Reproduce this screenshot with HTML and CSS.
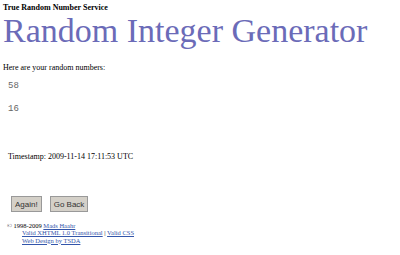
FILE: index.html
```html
<!DOCTYPE html>
<html lang="en">
<head>
    <meta charset="UTF-8">
    <title>RANDOM.ORG - Integer Generator</title>
    <link rel="stylesheet" href="styles.css">
</head>
<body>

    <div class="tagline">True Random Number Service</div>
    <h1>Random Integer Generator</h1>

    <p class="intro">Here are your random numbers:</p>

    <pre class="numbers">58

16</pre>

    <p class="timestamp">Timestamp: 2009-11-14 17:11:53 UTC</p>

    <form class="actions">
        <input type="button" value="Again!">
        <input type="button" value="Go Back">
    </form>

    <div class="footer">
        <div>&copy; 1998-2009 <a href="#">Mads Haahr</a></div>
        <div class="indent"><a href="#">Valid XHTML 1.0 Transitional</a> | <a href="#">Valid CSS</a></div>
        <div class="indent"><a href="#">Web Design by TSDA</a></div>
    </div>

</body>
</html>
```

FILE: styles.css
```css
body {
    font-family: 'Liberation Serif', 'Times New Roman', serif;
    background-color: #ffffff;
    color: #000;
    margin: 0;
    padding: 3px 3px;
}

.tagline {
    font-weight: bold;
    font-size: 8px;
    line-height: 10px;
}

h1 {
    font-weight: normal;
    font-size: 34px;
    line-height: 36px;
    color: #6b6bb8;
    margin: 0;
}

.intro {
    font-size: 8px;
    margin: 14px 0 0 0;
}

.numbers {
    font-family: 'Liberation Mono', monospace;
    font-size: 9px;
    color: #666;
    margin: 9px 0 0 5px;
    line-height: 11.5px;
}

.timestamp {
    font-size: 8px;
    margin: 36px 0 0 5px;
}

.actions {
    margin: 32px 0 0 8px;
}

.actions input {
    font-family: 'Liberation Sans', Arial, sans-serif;
    font-size: 8px;
    color: #333;
    background-color: #d4d0c8;
    border: 1px solid #999;
    padding: 3px 3px 2px;
    margin-right: 4px;
}

.footer {
    font-size: 6.5px;
    line-height: 7.5px;
    margin-top: 10px;
    padding-left: 4px;
}

.footer a {
    color: #3355aa;
}

.indent {
    padding-left: 15px;
}
```
